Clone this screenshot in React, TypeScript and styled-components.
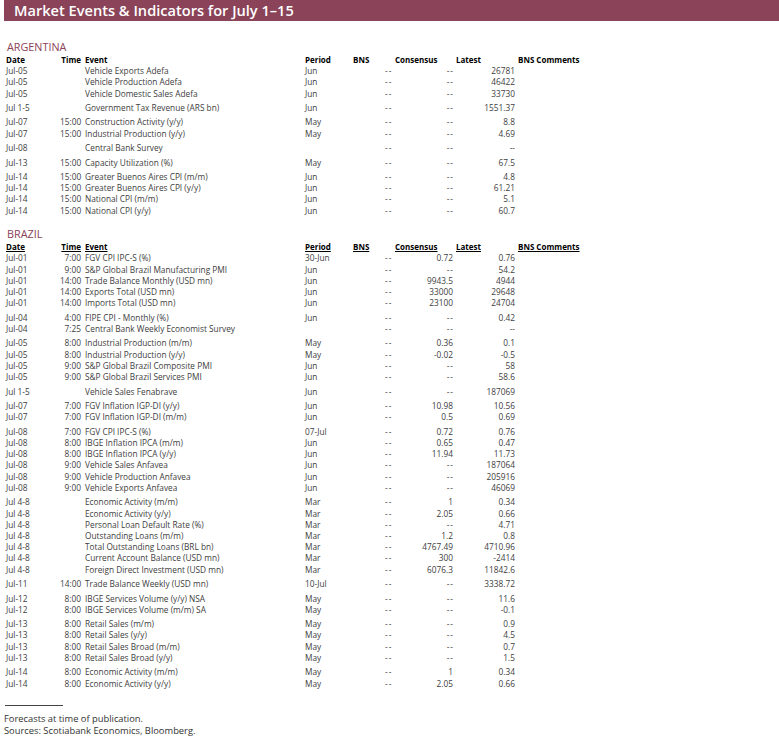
import React from "react";
import styled, { createGlobalStyle } from "styled-components";

const Global = createGlobalStyle`
  html, body { margin: 0; padding: 0; background: #fff; }
  body { width: 779px; height: 741px; overflow: hidden; font-family: "Open Sans", "Liberation Sans", sans-serif; }
`;

const Page = styled.div`
  width: 779px;
  height: 741px;
  display: flex;
  flex-direction: column;
  color: #404040;
`;

const Banner = styled.h1`
  margin: 0 0 0 4px;
  height: 21px;
  padding-left: 10px;
  background: #8a4358;
  color: #fff;
  font-size: 14.6px;
  font-weight: 600;
  line-height: 20px;
`;

const Section = styled.section<{ $top: number }>`
  margin-top: ${(p) => p.$top}px;
`;

const Country = styled.h2`
  margin: 0;
  padding-left: 7px;
  height: 14px;
  color: #8a4358;
  font-size: 10.8px;
  font-weight: 400;
  line-height: 13px;
`;

const Row = styled.div<{ $gap?: number }>`
  display: grid;
  grid-template-columns: 54px 21px 224px 48px 42px 58px 62px 1fr;
  height: 11px;
  margin-top: ${(p) => p.$gap ?? 0}px;
  padding-left: 6px;
  font-size: 8.3px;
  line-height: 11px;
  white-space: nowrap;
`;

const HeaderRow = styled(Row)<{ $underline?: boolean }>`
  color: #000;
  font-size: 8px;
  font-weight: 700;
  text-decoration: ${(p) => (p.$underline ? "underline" : "none")};
`;

const Cell = styled.span``;

const RightCell = styled.span`
  text-align: right;
`;

const ConsensusCell = styled.span<{ $dash: boolean }>`
  text-align: right;
  letter-spacing: ${(p) => (p.$dash ? "1px" : "normal")};
  margin-right: ${(p) => (p.$dash ? "-1px" : "0")};
`;

const EventCell = styled.span`
  padding-left: 4px;
`;

const BnsCell = styled.span`
  padding-left: 32px;
  letter-spacing: 1px;
`;

const LatestHead = styled.span`
  padding-left: 3px;
`;

const CommentHead = styled.span`
  padding-left: 3px;
`;

const Notes = styled.footer`
  margin-top: 16px;
  padding-left: 4px;
  font-size: 9.35px;
  line-height: 12px;
  color: #333;
`;

const NoteRule = styled.hr`
  width: 58px;
  height: 1px;
  margin: 0 0 7px 1px;
  border: 0;
  background: #444;
`;

const Note = styled.p`
  margin: 0;
`;

type R = [number, string, string, string, string, string, string];

const argentina: R[] = [
  [0, "Jul-05", "", "Vehicle Exports Adefa", "Jun", "--", "26781"],
  [0, "Jul-05", "", "Vehicle Production Adefa", "Jun", "--", "46422"],
  [1, "Jul-05", "", "Vehicle Domestic Sales Adefa", "Jun", "--", "33730"],
  [3, "Jul 1-5", "", "Government Tax Revenue (ARS bn)", "Jun", "--", "1551.37"],
  [3, "Jul-07", "15:00", "Construction Activity (y/y)", "May", "--", "8.8"],
  [1, "Jul-07", "15:00", "Industrial Production (y/y)", "May", "--", "4.69"],
  [3, "Jul-08", "", "Central Bank Survey", "", "--", "--"],
  [4, "Jul-13", "15:00", "Capacity Utilization (%)", "May", "--", "67.5"],
  [3, "Jul-14", "15:00", "Greater Buenos Aires CPI (m/m)", "Jun", "--", "4.8"],
  [0, "Jul-14", "15:00", "Greater Buenos Aires CPI (y/y)", "Jun", "--", "61.21"],
  [0, "Jul-14", "15:00", "National CPI (m/m)", "Jun", "--", "5.1"],
  [1, "Jul-14", "15:00", "National CPI (y/y)", "Jun", "--", "60.7"],
];

const brazil: R[] = [
  [0, "Jul-01", "7:00", "FGV CPI IPC-S (%)", "30-Jun", "0.72", "0.76"],
  [1, "Jul-01", "9:00", "S&P Global Brazil Manufacturing PMI", "Jun", "--", "54.2"],
  [0, "Jul-01", "14:00", "Trade Balance Monthly (USD mn)", "Jun", "9943.5", "4944"],
  [0, "Jul-01", "14:00", "Exports Total (USD mn)", "Jun", "33000", "29648"],
  [0, "Jul-01", "14:00", "Imports Total (USD mn)", "Jun", "23100", "24704"],
  [4, "Jul-04", "4:00", "FIPE CPI - Monthly (%)", "Jun", "--", "0.42"],
  [0, "Jul-04", "7:25", "Central Bank Weekly Economist Survey", "", "--", "--"],
  [3, "Jul-05", "8:00", "Industrial Production (m/m)", "May", "0.36", "0.1"],
  [1, "Jul-05", "8:00", "Industrial Production (y/y)", "May", "-0.02", "-0.5"],
  [0, "Jul-05", "9:00", "S&P Global Brazil Composite PMI", "Jun", "--", "58"],
  [0, "Jul-05", "9:00", "S&P Global Brazil Services PMI", "Jun", "--", "58.6"],
  [4, "Jul 1-5", "", "Vehicle Sales Fenabrave", "Jun", "--", "187069"],
  [3, "Jul-07", "7:00", "FGV Inflation IGP-DI (y/y)", "Jun", "10.98", "10.56"],
  [0, "Jul-07", "7:00", "FGV Inflation IGP-DI (m/m)", "Jun", "0.5", "0.69"],
  [4, "Jul-08", "7:00", "FGV CPI IPC-S (%)", "07-Jul", "0.72", "0.76"],
  [0, "Jul-08", "8:00", "IBGE Inflation IPCA (m/m)", "Jun", "0.65", "0.47"],
  [0, "Jul-08", "8:00", "IBGE Inflation IPCA (y/y)", "Jun", "11.94", "11.73"],
  [0, "Jul-08", "9:00", "Vehicle Sales Anfavea", "Jun", "--", "187064"],
  [1, "Jul-08", "9:00", "Vehicle Production Anfavea", "Jun", "--", "205916"],
  [0, "Jul-08", "9:00", "Vehicle Exports Anfavea", "Jun", "--", "46069"],
  [3, "Jul 4-8", "", "Economic Activity (m/m)", "Mar", "1", "0.34"],
  [1, "Jul 4-8", "", "Economic Activity (y/y)", "Mar", "2.05", "0.66"],
  [0, "Jul 4-8", "", "Personal Loan Default Rate (%)", "Mar", "--", "4.71"],
  [0, "Jul 4-8", "", "Outstanding Loans (m/m)", "Mar", "1.2", "0.8"],
  [0, "Jul 4-8", "", "Total Outstanding Loans (BRL bn)", "Mar", "4767.49", "4710.96"],
  [0, "Jul 4-8", "", "Current Account Balance (USD mn)", "Mar", "300", "-2414"],
  [1, "Jul 4-8", "", "Foreign Direct Investment (USD mn)", "Mar", "6076.3", "11842.6"],
  [3, "Jul-11", "14:00", "Trade Balance Weekly (USD mn)", "10-Jul", "--", "3338.72"],
  [4, "Jul-12", "8:00", "IBGE Services Volume (y/y) NSA", "May", "--", "11.6"],
  [0, "Jul-12", "8:00", "IBGE Services Volume (m/m) SA", "May", "--", "-0.1"],
  [3, "Jul-13", "8:00", "Retail Sales (m/m)", "May", "--", "0.9"],
  [0, "Jul-13", "8:00", "Retail Sales (y/y)", "May", "--", "4.5"],
  [1, "Jul-13", "8:00", "Retail Sales Broad (m/m)", "May", "--", "0.7"],
  [0, "Jul-13", "8:00", "Retail Sales Broad (y/y)", "May", "--", "1.5"],
  [3, "Jul-14", "8:00", "Economic Activity (m/m)", "May", "1", "0.34"],
  [1, "Jul-14", "8:00", "Economic Activity (y/y)", "May", "2.05", "0.66"],
];

function Table({ title, rows, top, underline }: { title: string; rows: R[]; top: number; underline?: boolean }) {
  return (
    <Section $top={top}>
      <Country>{title}</Country>
      <HeaderRow $underline={underline}>
        <Cell>Date</Cell>
        <RightCell>Time</RightCell>
        <EventCell>Event</EventCell>
        <Cell>Period</Cell>
        <Cell>BNS</Cell>
        <Cell>Consensus</Cell>
        <LatestHead>Latest</LatestHead>
        <CommentHead>BNS Comments</CommentHead>
      </HeaderRow>
      {rows.map(([gap, date, time, event, period, consensus, latest], i) => (
        <Row key={i} $gap={gap}>
          <Cell>{date}</Cell>
          <RightCell>{time}</RightCell>
          <EventCell>{event}</EventCell>
          <Cell>{period}</Cell>
          <BnsCell>--</BnsCell>
          <ConsensusCell $dash={consensus === "--"}>{consensus}</ConsensusCell>
          <RightCell>{latest}</RightCell>
          <Cell />
        </Row>
      ))}
    </Section>
  );
}

export default function App() {
  return (
    <Page>
      <Global />
      <Banner>Market Events &amp; Indicators for July 1–15</Banner>
      <Table title="ARGENTINA" rows={argentina} top={19} />
      <Table title="BRAZIL" rows={brazil} top={11} underline />
      <Notes>
        <NoteRule />
        <Note>Forecasts at time of publication.</Note>
        <Note>Sources: Scotiabank Economics, Bloomberg.</Note>
      </Notes>
    </Page>
  );
}
